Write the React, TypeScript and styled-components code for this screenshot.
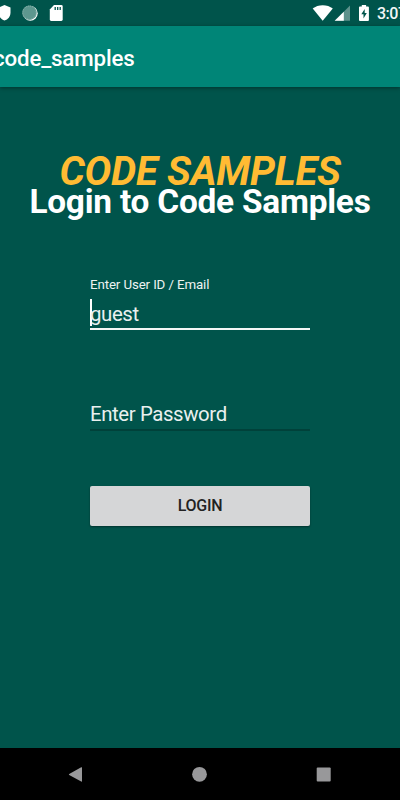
import React from "react";
import styled, { createGlobalStyle } from "styled-components";

const GlobalStyle = createGlobalStyle`
  *, *::before, *::after { box-sizing: border-box; }
  body { margin: 0; font-family: Roboto, sans-serif; background: #00544b; }
`;

const Screen = styled.div`
  display: flex;
  flex-direction: column;
  width: 400px;
  height: 800px;
  overflow: hidden;
  background: #00544b;
  color: #fff;
`;

const StatusBar = styled.header`
  display: flex;
  justify-content: space-between;
  flex: none;
  height: 26px;
  background: #00544b;
`;

const StatusIcons = styled.svg`
  display: block;
  flex: none;
  height: 26px;
`;

const StatusEnd = styled.div`
  display: flex;
  width: 90px;
  overflow: hidden;
`;

const Clock = styled.time`
  flex: none;
  margin-left: 3px;
  font-size: 16px;
  font-weight: 500;
  line-height: 28px;
  letter-spacing: -0.5px;
  color: #f3f7f6;
`;

const AppBar = styled.div`
  display: flex;
  align-items: center;
  flex: none;
  height: 61px;
  padding-top: 2px;
  background: #008577;
  box-shadow: 0 1px 4px rgba(0, 0, 0, 0.4);
`;

const AppTitle = styled.h1`
  margin: 0 0 0 -7px;
  font-size: 22.3px;
  font-weight: 500;
  line-height: 26px;
  letter-spacing: -0.15px;
`;

const Content = styled.main`
  display: flex;
  flex-direction: column;
  align-items: center;
  flex: 1;
  padding-top: 65px;
`;

const Brand = styled.div`
  height: 40px;
  font-size: 40px;
  font-style: italic;
  font-weight: 700;
  line-height: 40px;
  letter-spacing: -0.3px;
  white-space: nowrap;
  color: #ffbb33;
`;

const Heading = styled.h2`
  margin: -7px 0 0;
  font-size: 33.4px;
  font-weight: 700;
  line-height: 34px;
  letter-spacing: -0.22px;
  white-space: nowrap;
`;

const Form = styled.form`
  display: flex;
  flex-direction: column;
  width: 220px;
  margin-top: 58px;
`;

const Label = styled.label`
  font-size: 13.3px;
  line-height: 16px;
  letter-spacing: -0.12px;
  color: #eef3f2;
`;

const Field = styled.div<{ $focused?: boolean }>`
  display: flex;
  align-items: center;
  height: ${({ $focused }) => ($focused ? "37px" : "32px")};
  margin-top: ${({ $focused }) => ($focused ? "0" : "69px")};
  padding-top: ${({ $focused }) => ($focused ? "6px" : "0")};
  border-bottom: ${({ $focused }) => ($focused ? "2px solid #f4f7f6" : "2px solid #00413a")};
  font-size: 20.4px;
  line-height: 24px;
  letter-spacing: -0.4px;
  color: #eaf0ef;
`;

const Caret = styled.span`
  width: 2px;
  height: 27px;
  margin: -2px -2px 0 0;
  background: #fff;
`;

const LoginButton = styled.button`
  height: 40px;
  margin-top: 54.5px;
  padding: 1px 0 0;
  border: 0;
  border-radius: 2px;
  background: #d5d6d7;
  box-shadow: 0 1px 2px rgba(0, 0, 0, 0.4);
  font: 500 16px/18px Roboto, sans-serif;
  letter-spacing: -0.3px;
  color: #222;
`;

const NavBar = styled.nav`
  display: flex;
  align-items: center;
  justify-content: space-between;
  flex: none;
  height: 52px;
  padding: 0 68px 0 67px;
  background: #000;
`;

const NavIcon = styled.svg`
  display: block;
  width: 17px;
  height: 17px;
  fill: #98989a;
`;

export default function App() {
  return (
    <>
      <GlobalStyle />
      <Screen>
        <StatusBar>
          <StatusIcons width="80" viewBox="0 0 80 26">
            <path d="M4.500 5 10.500 7.500v5c0 4-2.500 7-6 8-3.500-1-6-4-6-8v-5z" fill="#fff" />
            <circle cx="30.300" cy="13.300" r="7.400" fill="#fff" />
            <circle cx="29.500" cy="12.700" r="7.200" fill="#5d978f" />
            <circle cx="29.500" cy="12.700" r="6.700" fill="none" stroke="#91b7b1" strokeWidth="1" strokeDasharray="1 1" />
            <path d="M54 5h7.300q1.400 0 1.400 1.400v13.100q0 1.400-1.400 1.400H51.200q-1.400 0-1.400-1.400V9.500z" fill="#fff" />
            <path d="M55.200 7v3M57.700 7v3M60.200 7v3" stroke="#00544b" strokeWidth="1.300" />
          </StatusIcons>
          <StatusEnd>
            <StatusIcons width="64" viewBox="310 0 64 26">
              <path d="M312.700 8.500C318 4 327.500 4 332.800 8.500L322.700 20.800z" fill="#fff" />
              <path d="M350 5.500v15.300h-15.300z" fill="#5d918b" />
              <path d="M343.800 11.700v9.100h-9.100z" fill="#fff" />
              <path d="M361.800 5h4.300v1.500h1.900q.9 0 .9.900v12.700q0 .9-.9.900h-8.100q-.9 0-.9-.9V7.400q0-.9.900-.9h1.900z" fill="#fff" />
              <path d="m364.700 9-3.400 5.300h2.200v4.300l3.300-5.600h-2.100z" fill="#00544b" />
            </StatusIcons>
            <Clock>3:07</Clock>
          </StatusEnd>
        </StatusBar>
        <AppBar>
          <AppTitle>code_samples</AppTitle>
        </AppBar>
        <Content>
          <Brand>CODE SAMPLES</Brand>
          <Heading>Login to Code Samples</Heading>
          <Form>
            <Label>Enter User ID / Email</Label>
            <Field $focused>
              <Caret />
              guest
            </Field>
            <Field>Enter Password</Field>
            <LoginButton type="button">LOGIN</LoginButton>
          </Form>
        </Content>
        <NavBar>
          <NavIcon viewBox="0 0 17 17">
            <path d="M14.200 1.300Q15 .8 15 1.800v13.300q0 1-.8.500L2.200 8.900q-.7-.4 0-.8z" />
          </NavIcon>
          <NavIcon viewBox="0 0 17 17">
            <circle cx="8.500" cy="8.300" r="7.400" />
          </NavIcon>
          <NavIcon viewBox="0 0 17 17">
            <rect x="1.700" y="1.500" width="14" height="14" rx="1" />
          </NavIcon>
        </NavBar>
      </Screen>
    </>
  );
}
